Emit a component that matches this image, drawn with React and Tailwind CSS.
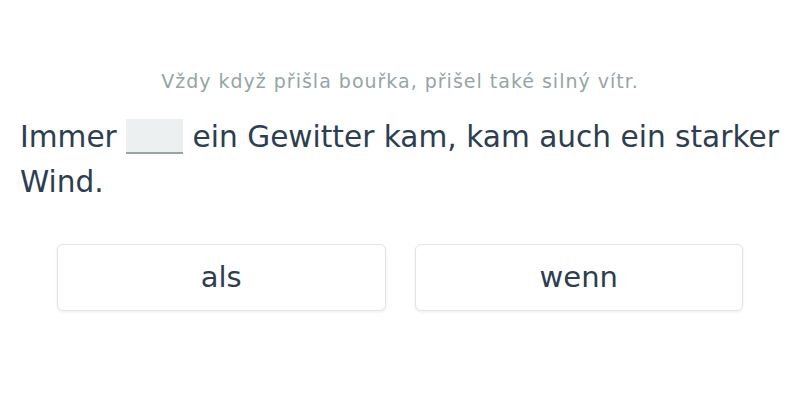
import React from "react";

const options = ["als", "wenn"];

export default function App() {
  return (
    <div className="min-h-[400px] bg-white px-5 pt-[68px] font-['DejaVu_Sans',sans-serif]">
      {/* Translation hint */}
      <p className="text-center text-[19px] leading-[27px] tracking-[1px] text-[#95a5a6]">
        Vždy když přišla bouřka, přišel také silný vítr.
      </p>

      {/* Sentence with gap */}
      <p className="mt-[20px] text-[29.6px] leading-[45px] text-[#2c3e50]">
        Immer{" "}
        <span className="inline-block h-[35px] w-[57px] align-[-7px] border-b-2 border-[#95a5a6] bg-[#ecf0f1]" />{" "}
        ein Gewitter kam, kam auch ein starker Wind.
      </p>

      {/* Answer options */}
      <div className="mt-[39px] grid grid-cols-2 gap-[29px] px-[37px]">
        {options.map((o) => (
          <button
            key={o}
            className="h-[67px] rounded-md border border-[#e2e4e7] bg-white text-[29px] text-[#2c3e50] shadow-[0_1px_3px_rgba(0,0,0,0.08)]"
          >
            {o}
          </button>
        ))}
      </div>
    </div>
  );
}
